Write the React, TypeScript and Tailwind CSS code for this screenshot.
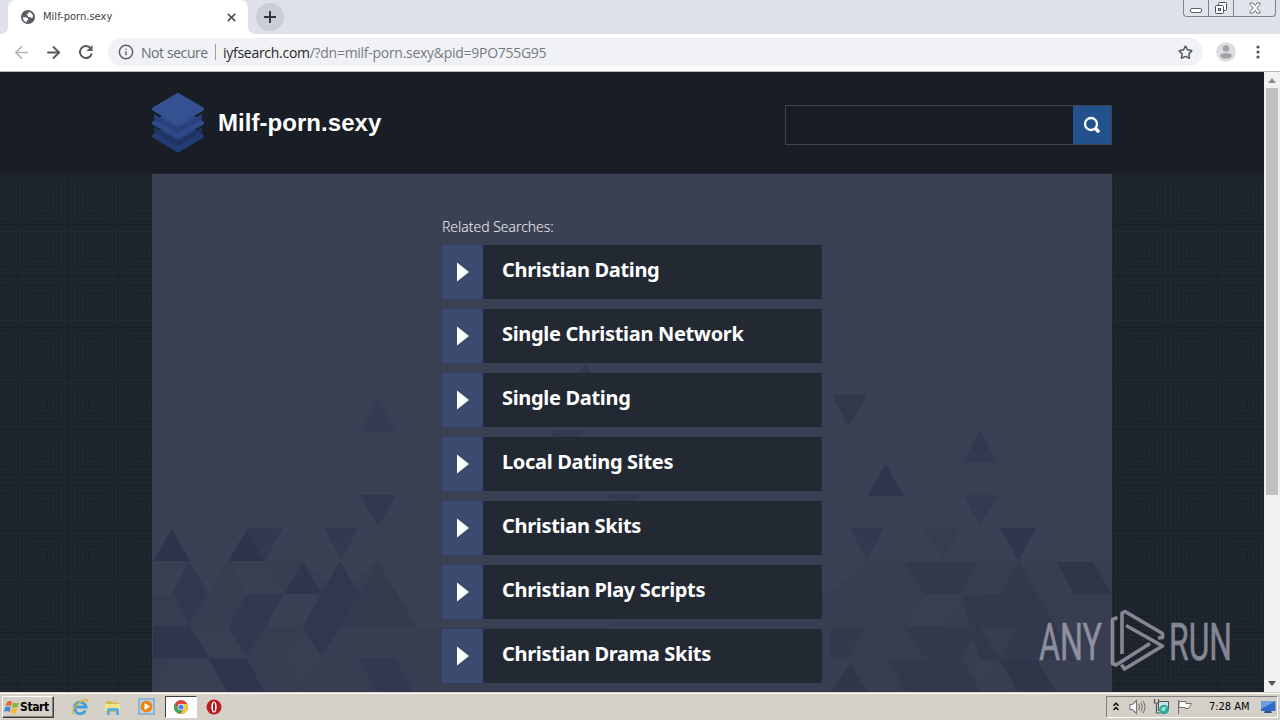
import { ArrowLeft, ArrowRight, Info, Star } from "lucide-react"

const searches = [
  "Christian Dating",
  "Single Christian Network",
  "Single Dating",
  "Local Dating Sites",
  "Christian Skits",
  "Christian Play Scripts",
  "Christian Drama Skits",
]

// [points, fill]
const shapes: [string, string][] = [
  ["152,594 208,594 227,561 303,561 341,594 378,561 416,627 600,627 700,594 830,594 868,561 1112,561 1112,692 152,692", "#383d52"],
  ["378,398 396,432 360,432", "#373b51"],
  ["585,362 603,395 567,395", "#34394e"],
  ["549,430 584,430 566,460", "#34394e"],
  ["606,494 641,494 623,526", "#34394e"],
  ["360,495 397,495 378,526", "#33384e"],
  ["171.7,529 190,561 153,561", "#2f344a"],
  ["247,529 265,561 228,561", "#2f344a"],
  ["247,528 283,528 265,560", "#34394f"],
  ["324,528 359,528 341,558", "#34394f"],
  ["154,562 189,562 171,592", "#3a3f54"],
  ["189,561 208,593 189,626 172,593", "#33384e"],
  ["230,561 265,561 284,594 247,594", "#3a3f54"],
  ["247,594 284,594 247,657 228,627", "#33384e"],
  ["303,561 321,594 284,594", "#31364c"],
  ["284,594 321,594 303,626 266,626", "#3b4055"],
  ["340,561 360,594 322,657 303,627", "#32374d"],
  ["378,562 416,627 341,627", "#353a4f"],
  ["153,626 190,626 209,658 153,658", "#30354b"],
  ["170,660 209,660 227,692 153,692", "#3a3f54"],
  ["190,627 228,627 247,657 209,657", "#393e53"],
  ["209,658 247,658 264,692 227,692", "#30354b"],
  ["303,627 322,657 303,690 284,657", "#393e53"],
  ["358,658 395,658 413,692 377,692", "#33384e"],
  ["832,395 867,395 848.5,427", "#33384d"],
  ["980,430 997,463 963,463", "#35394f"],
  ["885.7,464 904,496 868,496", "#30354b"],
  ["963,495 998,495 980,526", "#363a50"],
  ["849,528 884,528 867,559", "#34394f"],
  ["924,528 960,528 943,559", "#373c51"],
  ["1000,528 1036,528 1018,560", "#31364c"],
  ["905,562 978,562 960,594 923,594", "#33384d"],
  ["1019,562 1037,594 1074,660 980,660 962,595 1000,594", "#33384d"],
  ["1057,562 1093,562 1112,594 1074,594", "#30354a"],
  ["925,595 961,595 944,626 908,626", "#3a3f54"],
  ["980,627 1017,627 1000,658", "#383d52"],
  ["830,627 866,627 848,658 830,658", "#34394e"],
  ["905,627 980,627 960,659 923,659", "#34394e"],
  ["850,663 868,692 832,692", "#31364b"],
  ["888,660 963,660 980,692 906,692", "#33384d"],
  ["963,660 997,660 980,690", "#393e53"],
  ["1000,660 1037,660 1056,692 1018,692", "#30354a"],
]

function WindowControls() {
  return (
    <div className="flex h-[17px] w-[93px] overflow-hidden rounded-b-[4px] border border-t-0 border-[#7d828c] bg-[#e1e5eb]">
      <div className="flex w-[25px] items-end justify-center border-r border-[#7d828c] pb-[3px]">
        <div className="h-[5px] w-[12px] rounded-[2px] border border-[#5c6068] bg-white" />
      </div>
      <div className="flex w-[25px] justify-center border-r border-[#7d828c] pt-[1px]">
        <svg width="14" height="14" viewBox="0 0 14 14" fill="#fff" stroke="#4c5058">
          <rect x="4.5" y="1.5" width="8" height="8" rx="1" />
          <rect x="1.5" y="4.5" width="8" height="8" rx="1" />
          <rect x="4.5" y="7.5" width="2" height="2" />
        </svg>
      </div>
      <div className="flex flex-1 justify-center pt-[2px]">
        <svg width="12" height="12" viewBox="0 0 12 12" fill="#fff" stroke="#5c6068" strokeWidth="0.9">
          <path d="M1 1h3l2 2.600L8 1h3v1.600L7.800 6 11 9.400V11H8L6 8.400 4 11H1V9.400L4.200 6 1 2.600z" />
        </svg>
      </div>
    </div>
  )
}

function Browser() {
  return (
    <>
      {/* Tab strip */}
      <div className="flex h-[34px] items-start justify-between bg-[#dee1e8]">
        <div className="flex h-full">
          <div className="flex w-2 items-end bg-white">
            <div className="h-full w-2 rounded-br-[7px] bg-[#dee1e8]" />
          </div>
          <div className="flex h-full w-[240px] items-center rounded-t-[8px] bg-white pr-[12px] pl-[13px]">
            <svg width="14" height="14" viewBox="0 0 14 14">
              <circle cx="7" cy="7" r="7" fill="#5a5e63" />
              <path d="M2 7.300h3.200l2 1.500v1.300l-1.400.5v1.700C3.500 12 1.700 10 2 7.300zM7.500 2c2.200.1 4.100 1.700 4.500 4-.2 1.600-.8 2.200-1.500 2.200L9.300 7H7V5.800l-1.200-.7V3.700h1.700z" fill="#fff" />
            </svg>
            <span className="ml-2 flex-1 pt-px font-['DejaVu_Sans_Condensed','DejaVu_Sans',sans-serif] text-[11px] tracking-[0.03px] whitespace-nowrap text-[#3c4043] [font-stretch:condensed]">
              Milf-porn.sexy
            </span>
            <svg width="9" height="9" viewBox="0 0 9 9" stroke="#505458" strokeWidth="1.700">
              <path d="M.8.8l7.400 7.400M8.200.8L.8 8.200" />
            </svg>
          </div>
          <div className="w-2 bg-white">
            <div className="h-full w-2 rounded-bl-[7px] bg-[#dee1e8]" />
          </div>
          <div className="mt-[3px] flex size-7 items-center justify-center rounded-full bg-[#cbced5]">
            <svg width="12" height="12" viewBox="0 0 12 12" stroke="#33363b" strokeWidth="2">
              <path d="M6 0v12M0 6h12" />
            </svg>
          </div>
        </div>
        <div className="pr-1">
          <WindowControls />
        </div>
      </div>

      {/* Toolbar */}
      <div className="flex h-[38px] items-center border-b border-[#b4b6ba] bg-white pb-px pl-[12px]">
        <ArrowLeft className="size-[19px] text-[#b4b6b9]" strokeWidth={2.2} />
        <ArrowRight className="ml-[13px] size-[19px] text-[#55595e]" strokeWidth={2.4} />
        <svg className="ml-[15px]" width="16" height="16" viewBox="0 0 16 16">
          <path d="M12.600 4.200A6 6 0 1 0 13.800 9.500" fill="none" stroke="#55595e" strokeWidth="2" />
          <path d="M14.500 1v6h-6z" fill="#55595e" />
        </svg>
        <div className="ml-[14px] flex h-7 w-[1095px] items-center rounded-full bg-[#f0f2f5] pr-[10px] pl-[10px] font-['Open_Sans',sans-serif] text-[14px]">
          <Info className="size-4 text-[#5f6368]" strokeWidth={2.2} />
          <span className="ml-[7px] w-[67px] tracking-[-0.42px] whitespace-nowrap text-[#6b6f74]">Not secure</span>
          <span className="ml-[7px] h-4 w-px bg-[#9a9da2]" />
          <span className="ml-[7px] flex-1 tracking-[-0.28px] whitespace-nowrap text-[#777b80]">
            <span className="text-[#26282b]">iyfsearch.com</span>/?dn=milf-porn.sexy&amp;pid=9PO755G95
          </span>
          <Star className="size-[15px] text-[#55595e]" strokeWidth={2.4} />
        </div>
        <svg className="ml-[13px]" width="20" height="20" viewBox="0 0 20 20">
          <circle cx="10" cy="10" r="9.800" fill="#dcdddf" />
          <circle cx="10" cy="6.500" r="3.200" fill="#a0a2a5" />
          <ellipse cx="10" cy="13.800" rx="5.800" ry="2.900" fill="#a0a2a5" />
        </svg>
        <svg className="ml-[20px]" width="4" height="14" viewBox="0 0 4 14" fill="#505458">
          <circle cx="2" cy="2" r="1.600" />
          <circle cx="2" cy="7" r="1.600" />
          <circle cx="2" cy="12" r="1.600" />
        </svg>
      </div>
    </>
  )
}

function Header() {
  return (
    <div className="flex h-[102px] items-center border-b border-[#20252f] bg-[#181d26] px-[152px]">
      <svg width="52" height="61" viewBox="0 0 52 61" strokeLinejoin="round" strokeWidth="4">
        <path d="M2 44l24-14 24 14-24 14.500z" fill="#233d73" stroke="#233d73" />
        <path d="M2 35l24 14 24-14v5L26 54 2 40z" fill="#1f3464" />
        <path d="M2 31l24-14 24 14-24 14z" fill="#2d4b88" stroke="#2d4b88" />
        <path d="M2 22l24 14 24-14v5L26 41 2 27z" fill="#284279" />
        <path d="M2 17L26 3l24 14-24 14z" fill="#355192" stroke="#355192" />
      </svg>
      <span className="ml-[14px] flex-1 font-['Liberation_Sans',Arial,sans-serif] text-[24px] font-bold tracking-[0.05px] text-white">
        Milf-porn.sexy
      </span>
      <div className="mt-[4px] flex h-10 w-[327px] border border-[#3d4350] bg-[#181d25]">
        <div className="flex-1" />
        <div className="flex w-[38px] items-center justify-center bg-[#22518b]">
          <svg width="18" height="18" viewBox="0 0 18 18" fill="none" stroke="#fff" strokeLinecap="round">
            <circle cx="8" cy="8" r="6" strokeWidth="2.300" />
            <path d="M13.400 13.400l1.600 1.600" strokeWidth="3.600" />
          </svg>
        </div>
      </div>
    </div>
  )
}

function Watermark() {
  return (
    <svg className="absolute top-[536px] left-[1026px]" width="220" height="66" viewBox="1026 608 220 66" opacity="0.66">
      <g fill="#b9bbc8" stroke="#b9bbc8" strokeWidth="0.6" fontFamily="Roboto, sans-serif" fontSize="52">
        <text x="1039" y="659.500" textLength="63" lengthAdjust="spacingAndGlyphs">ANY</text>
        <text x="1169" y="659.500" textLength="63" lengthAdjust="spacingAndGlyphs">RUN</text>
      </g>
      <g fill="none" stroke="#b9bbc8" strokeWidth="3.600" strokeLinejoin="round">
        <path d="M1117.500 617.500l-5 2v44l3.500 1.500 34-21.500" />
        <path d="M1122 654v-41l3-1.500 37.500 22v4l-4.500.5" />
        <path d="M1126 625.500l36.500 20.500-38 23-3-4.500" />
      </g>
    </svg>
  )
}

function Page() {
  return (
    <div className="flex h-[620px]">
      <div className="relative w-[1264px] overflow-hidden bg-[#20262f]">
        <svg className="absolute inset-0" width="1264" height="620">
          <defs>
            <pattern id="squares" x="18" y="102" width="50" height="51" patternUnits="userSpaceOnUse">
              <g fill="none" stroke="#1b2129">
                <rect x="0.5" y="0.5" width="49" height="50" />
                <rect x="4.5" y="4.5" width="41" height="42" />
                <rect x="8.5" y="8.5" width="33" height="34" />
                <rect x="12.5" y="12.5" width="25" height="26" />
                <rect x="16.5" y="16.5" width="17" height="18" />
                <rect x="20.5" y="20.5" width="9" height="10" />
              </g>
            </pattern>
          </defs>
          <rect width="1264" height="620" fill="url(#squares)" />
        </svg>
        <div className="relative">
          <Header />
          <div className="relative mx-auto h-[518px] w-[960px] bg-[#3b4155] pl-[290px]">
            <svg className="absolute inset-0" width="960" height="518" viewBox="152 174 960 518">
              {shapes.map(([points, fill]) => (
                <polygon key={points} points={points} fill={fill} />
              ))}
            </svg>
            <div className="relative pt-[43px] font-['Noto_Sans',sans-serif]">
              <p className="h-7 text-[14px] leading-5 font-light tracking-[-0.03px] text-[#f0f1f4]">Related Searches:</p>
              <div className="flex flex-col gap-[10px]">
                {searches.map((label) => (
                  <div key={label} className="flex h-[54px] w-[380px] bg-[#222932]">
                    <div className="flex w-[41px] items-center justify-center bg-[#3d4a70]">
                      <svg width="12" height="20" viewBox="0 0 12 20" fill="#fff">
                        <path d="M0 0.500v19L12 10z" />
                      </svg>
                    </div>
                    <span className="pt-[11px] pl-[19px] text-[20px] leading-7 font-bold tracking-[-0.32px] text-white">
                      {label}
                    </span>
                  </div>
                ))}
              </div>
            </div>
          </div>
        </div>
        <Watermark />
      </div>

      {/* Scrollbar */}
      <div className="flex w-4 flex-col items-center bg-[#f1f1f1]">
        <div className="flex h-4 items-center">
          <svg width="8" height="5" viewBox="0 0 8 5" fill="#8f9194"><path d="M0 5l4-5 4 5z" /></svg>
        </div>
        <div className="h-[407px] w-3 bg-[#c1c1c1]" />
        <div className="mt-auto flex h-[18px] items-center">
          <svg width="8" height="5" viewBox="0 0 8 5" fill="#505050"><path d="M0 0h8L4 5z" /></svg>
        </div>
      </div>
    </div>
  )
}

function QuickLaunch() {
  return (
    <div className="flex items-center">
      <svg className="ml-[17px]" width="18" height="18" viewBox="0 0 18 18" fill="none">
        <path d="M14.500 12.500A5.800 5.800 0 1 1 15 9H5" stroke="#3e9edb" strokeWidth="2.800" />
        <path d="M2.500 16C-.5 14 5 6 11 3c4-2 6-1.500 5 1" stroke="#e2b534" strokeWidth="1.500" />
      </svg>
      <svg className="ml-[15px]" width="18" height="18" viewBox="0 0 18 18">
        <path d="M2 3h5l1 1.500h7V14H2z" fill="#d9b850" />
        <path d="M1 6h15v7H1z" fill="#f6e48c" />
        <path d="M3 17v-5q0-2 2-2h8q2 0 2 2v5h-3v-4H6v4z" fill="#5caedc" />
      </svg>
      <svg className="ml-[16px]" width="17" height="17" viewBox="0 0 17 17">
        <rect x="1" y="1" width="15" height="15" fill="#b9d8f0" stroke="#5593c8" />
        <circle cx="8.500" cy="8.500" r="6" fill="#ee8517" />
        <path d="M6.500 5v7l5.500-3.500z" fill="#fff" />
      </svg>
      <div className="ml-[10px] flex h-[22px] w-8 items-center justify-center border border-t-[#404040] border-r-white border-b-white border-l-[#404040] bg-white">
        <svg width="14" height="14" viewBox="0 0 14 14">
          <circle cx="7" cy="7" r="7" fill="#e04538" />
          <path d="M1 3.400A7 7 0 0 0 6.500 14L10 8.500 4 8.700z" fill="#3fa557" />
          <path d="M7 4h6.300A7 7 0 0 1 6.500 14L10 8.500z" fill="#f6c934" />
          <circle cx="7" cy="7" r="3.300" fill="#fff" />
          <circle cx="7" cy="7" r="2.600" fill="#4285e8" />
        </svg>
      </div>
      <svg className="ml-[9px]" width="16" height="16" viewBox="0 0 16 16">
        <circle cx="8" cy="8" r="7.500" fill="#b91d20" />
        <ellipse cx="8" cy="8" rx="2.700" ry="5.500" fill="#fff" />
        <ellipse cx="8" cy="8" rx="1" ry="4.500" fill="#a01214" />
      </svg>
    </div>
  )
}

function Taskbar() {
  return (
    <div className="flex h-7 items-center justify-between border-t border-[#d4d0c8] bg-[#d4d0c8] font-['DejaVu_Sans_Condensed','DejaVu_Sans',sans-serif] text-[11px] text-black shadow-[inset_0_1px_0_#fff] [font-stretch:condensed]">
      <div className="flex items-center pl-[2px]">
        <div className="flex h-[22px] w-[52px] items-center border border-t-white border-r-[#404040] border-b-[#404040] border-l-white pl-[1px] shadow-[inset_-1px_-1px_0_#808080]">
          <svg width="16" height="16" viewBox="0 0 16 16">
            <path d="M3 3q3-2 5 0L7 7.500q-2-2-5.500-.5z" fill="#e8642c" />
            <path d="M9 3.500q3 1.500 6 0L13.500 8q-3 1.500-5.500 0z" fill="#82b93c" />
            <path d="M1.200 8.300q3-1.500 5.500.2L5.500 13q-3-2-5.500-.3z" fill="#3f86d8" />
            <path d="M7.600 9q3 1.500 5.700.2L12 13.800q-3 1.200-5.600-.3z" fill="#f2bd2d" />
          </svg>
          <span className="text-[12px] font-bold tracking-[-0.4px]">Start</span>
        </div>
        <QuickLaunch />
      </div>
      <div className="mr-[2px] flex h-[22px] w-[172px] items-center border border-t-[#808080] border-r-white border-b-white border-l-[#808080] pl-[6px]">
        <svg width="6" height="9" viewBox="0 0 6 9" fill="none" stroke="#000" strokeWidth="1.300">
          <path d="M.5 3.700L3 1.200l2.500 2.500M.5 8L3 5.500 5.500 8" />
        </svg>
        <svg className="ml-[10px]" width="17" height="16" viewBox="0 0 17 16" fill="#fff" stroke="#777" strokeWidth="1.100">
          <path d="M1 5.500h2.500l4-4v13l-4-4H1z" />
          <path d="M9.500 5q2 3 0 6M11.700 3.500q3 4.500 0 9M14 2q4 6 0 12" fill="none" />
        </svg>
        <svg className="ml-[7px]" width="17" height="17" viewBox="0 0 17 17">
          <path d="M5.500 3.500h10v9h-10z" fill="#cce2ea" stroke="#555" />
          <path d="M1.500 1v4h4V1M3.500 5v10h4" fill="none" stroke="#555" strokeWidth="1.200" />
          <circle cx="11" cy="11.500" r="4.800" fill="#2daa98" />
          <path d="M8 11q3-4 6-1-2 0-2 2t-3 1z" fill="#8fe0cf" />
        </svg>
        <svg className="ml-[7px]" width="16" height="16" viewBox="0 0 16 16" fill="#fff" stroke="#707070">
          <path d="M1.500 1v14M2 2.500h7v2h5.500l-3 5H8v-1H2z" />
        </svg>
        <span className="ml-[16px] w-[42px] pt-[2px] tracking-[-0.03px] whitespace-nowrap">7:28 AM</span>
        <svg className="ml-[9px]" width="16" height="14" viewBox="0 0 16 14">
          <path d="M1 1h14.500v10H1z" fill="#2e6bc6" />
          <path d="M1 1h14.500L1 9z" fill="#6d9fe0" />
          <path d="M5 11h6l1 2H4z" fill="#31517e" />
        </svg>
      </div>
    </div>
  )
}

export default function App() {
  return (
    <div className="h-[720px] w-[1280px] overflow-hidden">
      <Browser />
      <Page />
      <Taskbar />
    </div>
  )
}
